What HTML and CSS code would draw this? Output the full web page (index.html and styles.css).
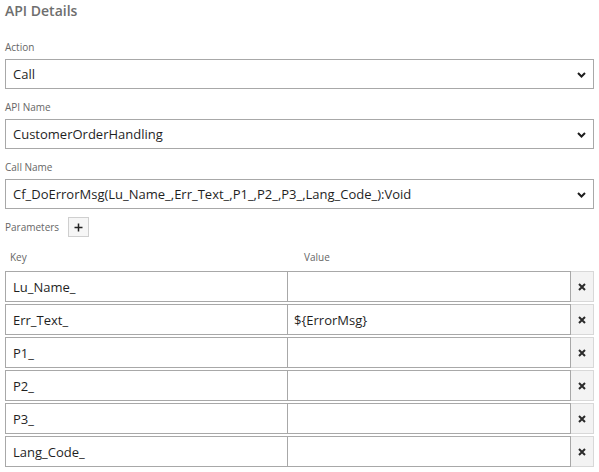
FILE: index.html
```html
<!DOCTYPE html>
<html>
<head>
<meta charset="utf-8">
<link rel="stylesheet" href="styles.css">
</head>
<body>
<div class="panel">
  <h2 class="title">API Details</h2>

  <div class="field">
    <div class="label">Action</div>
    <div class="select"><span>Call</span><svg class="chev" width="9" height="6" viewBox="0 0 9 6"><polyline points="1,1 4.5,4.5 8,1" fill="none" stroke="#1e1e1e" stroke-width="2"/></svg></div>
  </div>

  <div class="field">
    <div class="label">API Name</div>
    <div class="select"><span>CustomerOrderHandling</span><svg class="chev" width="9" height="6" viewBox="0 0 9 6"><polyline points="1,1 4.5,4.5 8,1" fill="none" stroke="#1e1e1e" stroke-width="2"/></svg></div>
  </div>

  <div class="field">
    <div class="label">Call Name</div>
    <div class="select"><span>Cf_DoErrorMsg(Lu_Name_,Err_Text_,P1_,P2_,P3_,Lang_Code_):Void</span><svg class="chev" width="9" height="6" viewBox="0 0 9 6"><polyline points="1,1 4.5,4.5 8,1" fill="none" stroke="#1e1e1e" stroke-width="2"/></svg></div>
  </div>

  <div class="params-bar">
    <span class="label">Parameters</span>
    <span class="add"><svg width="9" height="9" viewBox="0 0 9 9"><path d="M4.5 0.5v8M0.5 4.5h8" stroke="#222" stroke-width="1.5"/></svg></span>
  </div>

  <div class="param-grid param-head">
    <span class="key-h">Key</span>
    <span class="val-h">Value</span>
    <span></span>
  </div>

  <div class="param-rows">
    <div class="param-grid row"><div class="cell key">Lu_Name_</div><div class="cell val"></div><div class="del"><svg width="8" height="8" viewBox="0 0 8 8"><path d="M1 1L7 7M7 1L1 7" stroke="#2a2a2a" stroke-width="2"/></svg></div></div>
    <div class="param-grid row"><div class="cell key">Err_Text_</div><div class="cell val">${ErrorMsg}</div><div class="del"><svg width="8" height="8" viewBox="0 0 8 8"><path d="M1 1L7 7M7 1L1 7" stroke="#2a2a2a" stroke-width="2"/></svg></div></div>
    <div class="param-grid row"><div class="cell key">P1_</div><div class="cell val"></div><div class="del"><svg width="8" height="8" viewBox="0 0 8 8"><path d="M1 1L7 7M7 1L1 7" stroke="#2a2a2a" stroke-width="2"/></svg></div></div>
    <div class="param-grid row"><div class="cell key">P2_</div><div class="cell val"></div><div class="del"><svg width="8" height="8" viewBox="0 0 8 8"><path d="M1 1L7 7M7 1L1 7" stroke="#2a2a2a" stroke-width="2"/></svg></div></div>
    <div class="param-grid row"><div class="cell key">P3_</div><div class="cell val"></div><div class="del"><svg width="8" height="8" viewBox="0 0 8 8"><path d="M1 1L7 7M7 1L1 7" stroke="#2a2a2a" stroke-width="2"/></svg></div></div>
    <div class="param-grid row"><div class="cell key">Lang_Code_</div><div class="cell val"></div><div class="del"><svg width="8" height="8" viewBox="0 0 8 8"><path d="M1 1L7 7M7 1L1 7" stroke="#2a2a2a" stroke-width="2"/></svg></div></div>
  </div>
</div>
</body>
</html>
```

FILE: styles.css
```css
html, body {
  margin: 0;
  padding: 0;
  background: #ffffff;
}
body {
  font-family: "Open Sans", "Liberation Sans", sans-serif;
  color: #222222;
}
.panel {
  padding: 0 5px;
}
.title {
  margin: 0;
  padding-top: 1px;
  font-size: 14px;
  line-height: 20px;
  font-weight: 600;
  color: #6e6e6e;
}
.field {
  margin-top: 11px;
}
.title + .field {
  margin-top: 19px;
}
.label {
  display: block;
  font-size: 10px;
  line-height: 14px;
  color: #666666;
}
.field .label {
  margin-bottom: 5px;
}
.select {
  box-sizing: border-box;
  height: 30px;
  border: 1px solid #a8a8a8;
  display: flex;
  align-items: center;
  justify-content: space-between;
  padding: 0 7px 0 7px;
  font-size: 13px;
  color: #1f1f1f;
}
.chev {
  display: block;
  margin-top: 1px;
}
.params-bar {
  margin-top: 8px;
  height: 20px;
  display: flex;
  align-items: center;
  gap: 9px;
}
.add {
  box-sizing: border-box;
  width: 21px;
  height: 20px;
  border: 1px solid #cfcfcf;
  background: #f6f6f6;
  display: flex;
  align-items: center;
  justify-content: center;
}
.param-grid {
  display: grid;
  grid-template-columns: 1fr 1fr 23px;
}
.param-head {
  margin-top: 13px;
  font-size: 10px;
  line-height: 14px;
  color: #666666;
}
.key-h {
  padding-left: 5px;
}
.val-h {
  padding-left: 16px;
}
.param-rows {
  margin-top: 7px;
  display: flex;
  flex-direction: column;
  gap: 2px;
}
.row {
  height: 31px;
}
.cell {
  box-sizing: border-box;
  border: 1px solid #a8a8a8;
  display: flex;
  align-items: center;
  padding-left: 7px;
  font-size: 13px;
  color: #1f1f1f;
}
.val {
  border-left: none;
  padding-left: 6px;
}
.del {
  box-sizing: border-box;
  border: 1px solid #d8d8d8;
  border-left: none;
  background: #f3f3f3;
  display: flex;
  align-items: center;
  justify-content: center;
}
```
